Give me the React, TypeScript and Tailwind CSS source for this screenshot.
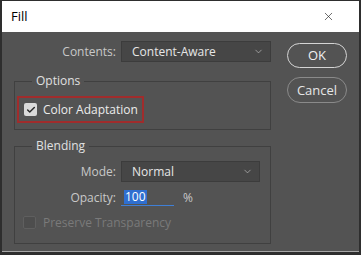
import { ChevronDown, Check, X } from 'lucide-react';

function Select({ value, width }: { value: string; width: string }) {
  return (
    <div
      className={`${width} h-[21px] flex items-center justify-between pl-[10px] pr-[6px] bg-[#464646] border border-[#3c3c3c] text-[#e6e6e6]`}
    >
      <span>{value}</span>
      <ChevronDown size={11} strokeWidth={1.5} className="text-[#bdbdbd]" />
    </div>
  );
}

export default function App() {
  return (
    <div
      className="w-[361px] h-[255px] bg-[#2e2e2e] border-t border-x-2 border-[#2e2e2e] flex flex-col text-[12px] leading-none"
      style={{ fontFamily: '"Open Sans", "Noto Sans", sans-serif' }}
    >
      <div className="h-[31px] shrink-0 bg-white flex items-center justify-between pl-[9px] pr-[24px]">
        <span className="text-[13px] text-black">Fill</span>
        <X size={13} strokeWidth={1.2} className="text-[#222]" />
      </div>

      <div className="flex-1 bg-[#535353] flex pl-[12px] pt-[9px] border-b border-[#a6a6a6]">
        <div className="w-[257px] flex flex-col">
          <div className="flex items-center h-[21px]">
            <span className="w-[102px] text-right text-[#c8c8c8]">Contents:</span>
            <div className="ml-[5px]">
              <Select value="Content-Aware" width="w-[150px]" />
            </div>
          </div>

          <fieldset className="mt-[13px] h-[55px] border border-[#404040] pl-[2px]">
            <legend className="ml-[15px] px-[4px] text-[#e0e0e0]">Options</legend>
            <div className="mt-[9px] w-[127px] h-[27px] border-2 border-[#a02c2c] flex items-center pl-[5px] gap-[6px]">
              <span className="w-[13px] h-[13px] rounded-[2px] bg-[#dadada] flex items-center justify-center">
                <Check size={10} strokeWidth={3.5} className="text-[#2a2a2a]" />
              </span>
              <span className="text-[#ececec]">Color Adaptation</span>
            </div>
          </fieldset>

          <fieldset className="mt-[10px] h-[104px] border border-[#404040]">
            <legend className="ml-[17px] px-[4px] text-[#e0e0e0]">Blending</legend>
            <div className="flex items-center h-[21px] mt-[9px]">
              <span className="w-[101px] text-right text-[#c8c8c8]">Mode:</span>
              <div className="ml-[5px]">
                <Select value="Normal" width="w-[139px]" />
              </div>
            </div>
            <div className="flex items-center h-[17px] mt-[7px]">
              <span className="w-[101px] text-right text-[#c8c8c8]">Opacity:</span>
              <div className="ml-[5px] w-[53px] h-[17px] border-b border-[#3f7fd6] pl-[3px] flex items-center">
                <span className="bg-[#2f6fd0] text-white px-[1px] py-[1px]">100</span>
              </div>
              <span className="ml-[9px] text-[#c8c8c8]">%</span>
            </div>
            <div className="flex items-center gap-[7px] mt-[10px] pl-[8px]">
              <span className="w-[13px] h-[13px] rounded-[2px] border border-[#5f5f5f] bg-[#4d4d4d]" />
              <span className="text-[#7a7a7a]">Preserve Transparency</span>
            </div>
          </fieldset>
        </div>

        <div className="ml-[16px] mt-[1px] pt-[1px] flex flex-col gap-[9px]">
          <button className="w-[60px] h-[25px] rounded-full border-[1.5px] border-[#d4d4d4] text-[#f0f0f0] text-[13px]">
            OK
          </button>
          <button className="w-[60px] h-[26px] rounded-full border border-[#8a8a8a] text-[#e6e6e6] text-[13px]">
            Cancel
          </button>
        </div>
      </div>
      <div className="h-[3px] shrink-0 bg-[#2e2e2e]" />
    </div>
  );
}
